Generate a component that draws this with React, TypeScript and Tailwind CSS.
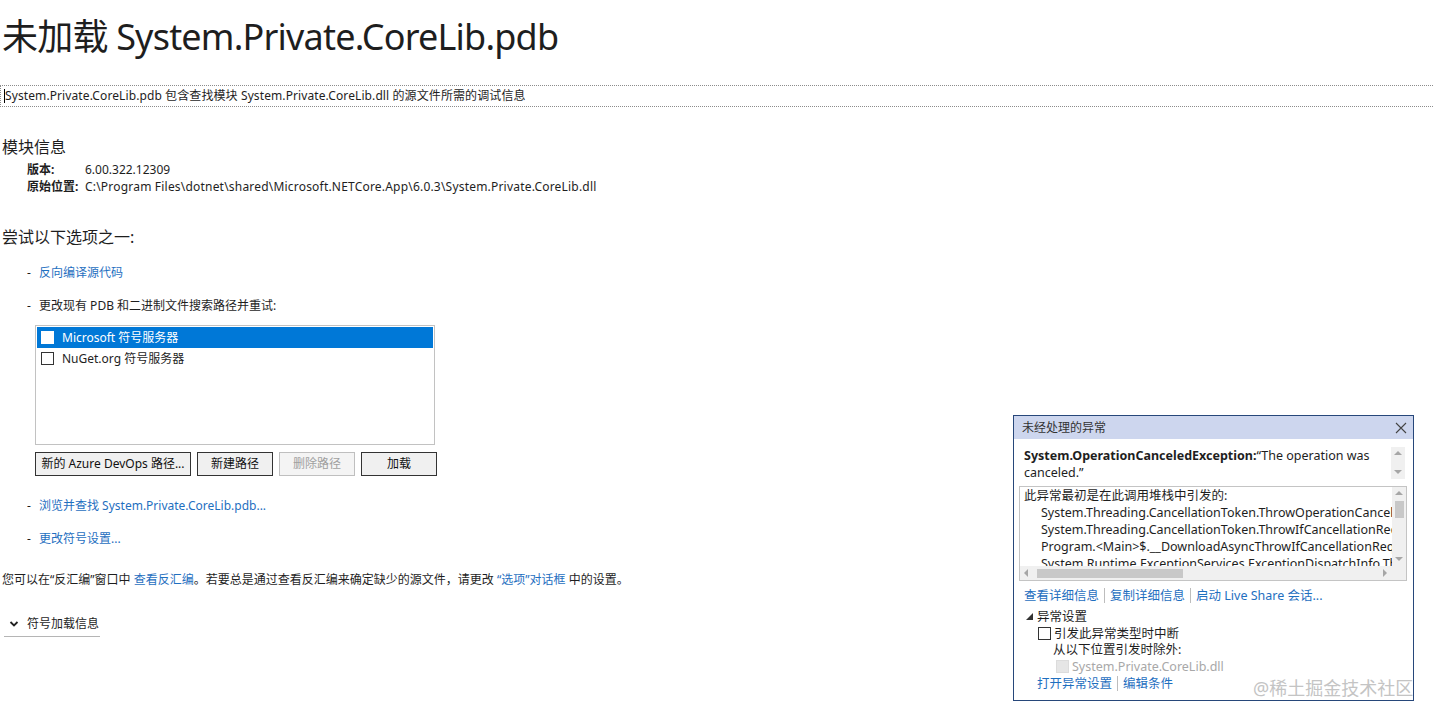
import React from 'react';

const font = { fontFamily: '"Noto Sans", "Noto Sans CJK SC", sans-serif' };

const Link: React.FC<{ children: React.ReactNode }> = ({ children }) => (
    <span className="text-[#1f6fbf] cursor-pointer">{children}</span>
);

const Checkbox: React.FC<{ disabled?: boolean }> = ({ disabled }) => (
    <span
        className={
            disabled
                ? 'inline-block w-[13px] h-[13px] bg-[#e6e6e6] border border-[#dcdcdc] shrink-0'
                : 'inline-block w-[13px] h-[13px] bg-white border border-[#333] shrink-0'
        }
    />
);

const Tri: React.FC<{ dir: 'up' | 'down' | 'left' | 'right' }> = ({ dir }) => {
    const pts = {
        up: '1,6 5,2 9,6',
        down: '1,3 5,7 9,3',
        left: '6,1 2,5 6,9',
        right: '3,1 7,5 3,9',
    }[dir];
    return (
        <svg width="10" height="10" viewBox="0 0 10 10" className="shrink-0">
            <polygon points={pts} fill="#a6a6a6" />
        </svg>
    );
};

const OptionItem: React.FC<{ className?: string; children: React.ReactNode }> = ({ className, children }) => (
    <div className={`flex items-center h-[17px] text-[12px] leading-[17px] pl-[27px] ${className ?? ''}`}>
        <span className="w-[12px]">-</span>
        {children}
    </div>
);

const Btn: React.FC<{ w: string; disabled?: boolean; children: React.ReactNode }> = ({ w, disabled, children }) => (
    <div
        className={`${w} h-[24px] flex items-center justify-center text-[12px] ${
            disabled ? 'border border-[#bfbfbf] bg-[#f4f4f4] text-[#a0a0a0]' : 'border border-[#333] bg-[#f0f0f0] text-[#111]'
        }`}
    >
        {children}
    </div>
);

const ExceptionPopup: React.FC = () => (
    <div className="absolute left-[1013px] top-[415px] w-[401px] h-[286px] border border-[#27477a] bg-white flex flex-col text-[#1e1e1e]">
        <div className="h-[23px] bg-[#cdd6ee] flex items-center justify-between pl-[8px] pr-[5px]">
            <span className="text-[12px] text-[#333]">未经处理的异常</span>
            <svg width="14" height="14" viewBox="0 0 14 14">
                <path d="M2 2 L12 12 M12 2 L2 12" stroke="#444" strokeWidth="1.1" />
            </svg>
        </div>
        <div className="flex mt-[8px] pl-[10px] pr-[8px]">
            <div className="flex-1 text-[12.5px] leading-[17px] pr-[14px]">
                <span className="font-bold">System.OperationCanceledException:</span>“The operation was canceled.”
            </div>
            <div className="w-[14px] h-[32px] bg-[#f0f0f0] flex flex-col items-center justify-between py-[2px]">
                <Tri dir="up" />
                <Tri dir="down" />
            </div>
        </div>
        <div className="ml-[5px] mt-[5px] w-[388px] h-[95px] border border-[#c4c4c4] flex flex-col overflow-hidden">
            <div className="flex flex-1 overflow-hidden">
                <div className="flex-1 overflow-hidden whitespace-nowrap text-[12.5px] leading-[17px] pl-[4px]">
                    <div>此异常最初是在此调用堆栈中引发的:</div>
                    <div className="pl-[17px]">System.Threading.CancellationToken.ThrowOperationCanceledException()</div>
                    <div className="pl-[17px]">System.Threading.CancellationToken.ThrowIfCancellationRequested()</div>
                    <div className="pl-[17px]">Program.&lt;Main&gt;$.__DownloadAsyncThrowIfCancellationRequested|0_0()</div>
                    <div className="pl-[17px]">System.Runtime.ExceptionServices.ExceptionDispatchInfo.Throw()</div>
                </div>
                <div className="w-[14px] bg-[#f0f0f0] flex flex-col items-center">
                    <div className="h-[14px] flex items-center"><Tri dir="up" /></div>
                    <div className="w-[9px] h-[17px] bg-[#c8c8c8]" />
                    <div className="flex-1" />
                    <div className="h-[14px] flex items-center"><Tri dir="down" /></div>
                </div>
            </div>
            <div className="h-[14px] bg-[#f0f0f0] flex items-center">
                <div className="w-[14px] flex justify-center"><Tri dir="left" /></div>
                <div className="w-[146px] h-[9px] bg-[#c8c8c8] ml-[3px]" />
                <div className="flex-1" />
                <div className="w-[14px] flex justify-center mr-[14px]"><Tri dir="right" /></div>
            </div>
        </div>
        <div className="flex items-center mt-[6px] pl-[10px] text-[12.5px] leading-[17px] h-[17px]">
            <Link>查看详细信息</Link>
            <span className="w-px h-[15px] bg-[#bdbdbd] mx-[5px]" />
            <Link>复制详细信息</Link>
            <span className="w-px h-[15px] bg-[#bdbdbd] mx-[5px]" />
            <Link>启动 Live Share 会话...</Link>
        </div>
        <div className="flex items-center mt-[4px] pl-[12px] text-[12.5px] leading-[17px] h-[17px]">
            <svg width="7" height="7" viewBox="0 0 7 7" className="mr-[4px]">
                <polygon points="7,0 7,7 0,7" fill="#333" />
            </svg>
            <span>异常设置</span>
        </div>
        <div className="flex items-center pl-[24px] text-[12.5px] leading-[17px] h-[17px]">
            <Checkbox />
            <span className="ml-[3px]">引发此异常类型时中断</span>
        </div>
        <div className="pl-[39px] text-[12.5px] leading-[16px] h-[16px]">从以下位置引发时除外:</div>
        <div className="flex items-center pl-[42px] text-[12.5px] leading-[17px] h-[17px] text-[#a8a8a8]">
            <Checkbox disabled />
            <span className="ml-[3px]">System.Private.CoreLib.dll</span>
        </div>
        <div className="flex items-center pl-[23px] text-[12.5px] leading-[17px] h-[17px]">
            <Link>打开异常设置</Link>
            <span className="w-px h-[15px] bg-[#bdbdbd] mx-[5px]" />
            <Link>编辑条件</Link>
        </div>
    </div>
);

const App: React.FC = () => {
    return (
        <div className="relative w-[1433px] h-[717px] bg-white overflow-hidden text-[#1e1e1e]" style={font}>
            <h1 className="mt-[14px] ml-[2px] h-[46px] text-[36px] leading-[46px] font-normal whitespace-nowrap tracking-[-0.8px]">
                未加载 System.Private.CoreLib.pdb
            </h1>
            <div className="mt-[25px] h-[22px] border-y border-l border-dotted border-[#8c8c8c] flex items-center pl-[3px]">
                <span className="w-px h-[14px] bg-black" />
                <span className="text-[12px] leading-[20px] tracking-[0.1px]">
                    System.Private.CoreLib.pdb 包含查找模块 System.Private.CoreLib.dll 的源文件所需的调试信息
                </span>
            </div>

            <h2 className="mt-[29px] ml-[2px] h-[22px] text-[16px] leading-[22px] font-normal">模块信息</h2>
            <div className="mt-[3px] pl-[27px] text-[12px] leading-[17px]">
                <div className="flex h-[17px]">
                    <span className="w-[58px] font-bold">版本:</span>
                    <span>6.00.322.12309</span>
                </div>
                <div className="flex h-[17px]">
                    <span className="w-[58px] font-bold">原始位置:</span>
                    <span className="tracking-[0.2px]">C:\Program Files\dotnet\shared\Microsoft.NETCore.App\6.0.3\System.Private.CoreLib.dll</span>
                </div>
            </div>

            <h2 className="mt-[31px] ml-[2px] h-[22px] text-[16px] leading-[22px] font-normal">尝试以下选项之一:</h2>
            <OptionItem className="mt-[16px]">
                <Link>反向编译源代码</Link>
            </OptionItem>
            <OptionItem className="mt-[16px]">
                <span>更改现有 PDB 和二进制文件搜索路径并重试:</span>
            </OptionItem>

            <div className="ml-[35px] mt-[11px] w-[400px] h-[120px] border border-[#c2c2c2] p-[1px]">
                <div className="h-[21px] bg-[#0078d7] flex items-center pl-[4px] text-white text-[12px]">
                    <span className="inline-block w-[13px] h-[13px] bg-white border border-white" />
                    <span className="ml-[8px]">Microsoft 符号服务器</span>
                </div>
                <div className="h-[21px] flex items-center pl-[4px] text-[12px]">
                    <Checkbox />
                    <span className="ml-[8px]">NuGet.org 符号服务器</span>
                </div>
            </div>
            <div className="ml-[35px] mt-[7px] flex gap-[6px]">
                <Btn w="w-[156px]">新的 Azure DevOps 路径...</Btn>
                <Btn w="w-[76px]">新建路径</Btn>
                <Btn w="w-[76px]" disabled>删除路径</Btn>
                <Btn w="w-[76px]">加载</Btn>
            </div>

            <OptionItem className="mt-[21px]">
                <Link>浏览并查找 System.Private.CoreLib.pdb...</Link>
            </OptionItem>
            <OptionItem className="mt-[16px]">
                <Link>更改符号设置...</Link>
            </OptionItem>

            <p className="mt-[24px] ml-[2px] h-[17px] text-[12px] leading-[17px] whitespace-nowrap">
                您可以在“反汇编”窗口中 <Link>查看反汇编</Link>。若要总是通过查看反汇编来确定缺少的源文件，请更改 <Link>“选项”对话框</Link> 中的设置。
            </p>

            <div className="mt-[27px] ml-[4px] w-[96px] border-b border-[#b5b5b5] pb-[4px] flex items-center h-[22px]">
                <svg width="10" height="8" viewBox="0 0 10 8" className="ml-[5px] mr-[8px]">
                    <path d="M1.5 2 L5 5.5 L8.5 2" stroke="#222" strokeWidth="1.8" fill="none" />
                </svg>
                <span className="text-[12px] leading-[17px]">符号加载信息</span>
            </div>

            <ExceptionPopup />

            <span className="absolute left-[1253px] top-[676px] text-[18px] leading-[24px] text-[#c4c4c4] whitespace-nowrap">
                @稀土掘金技术社区
            </span>
        </div>
    );
};

export default App;
